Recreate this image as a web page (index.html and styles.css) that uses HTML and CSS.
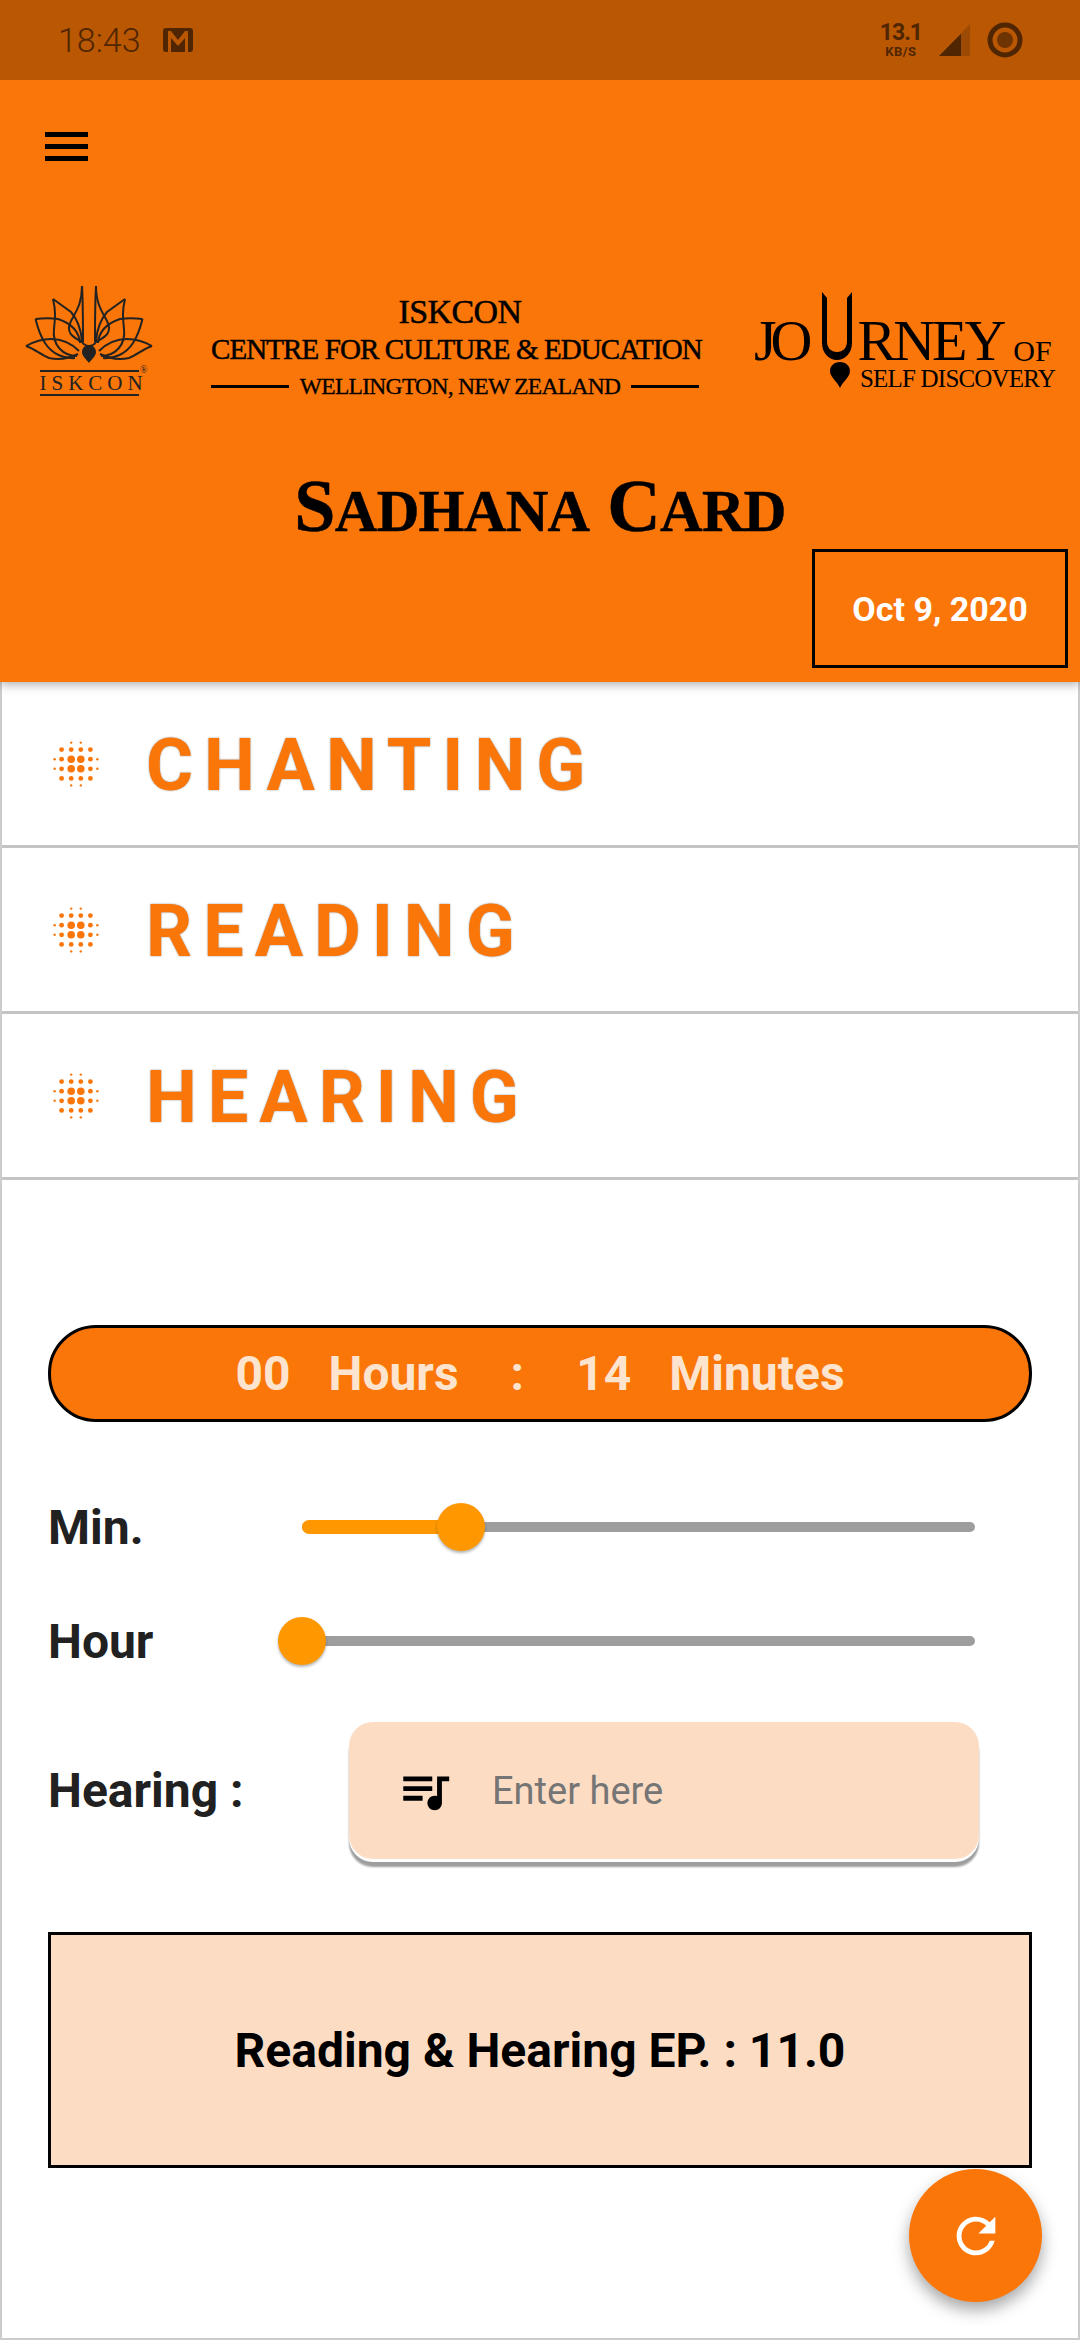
FILE: index.html
```html
<!DOCTYPE html>
<html lang="en">
<head>
<meta charset="utf-8">
<title>Sadhana Card</title>
<link rel="stylesheet" href="styles.css">
</head>
<body>
<svg class="defs" width="0" height="0">
  <symbol id="dots" viewBox="-24 -24 48 48">
    <g fill="#fb7609">
      <circle cx="-4.8" cy="-21.4" r="1.2"/><circle cx="4.8" cy="-21.4" r="1.2"/>
      <circle cx="-14.4" cy="-14.4" r="2.4"/><circle cx="-4.8" cy="-14.4" r="2.4"/><circle cx="4.8" cy="-14.4" r="2.4"/><circle cx="14.4" cy="-14.4" r="2.4"/>
      <circle cx="-21.4" cy="-4.8" r="1.2"/><circle cx="-14.4" cy="-4.8" r="2.4"/><circle cx="-4.8" cy="-4.8" r="3.8"/><circle cx="4.8" cy="-4.8" r="3.8"/><circle cx="14.4" cy="-4.8" r="2.4"/><circle cx="21.4" cy="-4.8" r="1.2"/>
      <circle cx="-21.4" cy="4.8" r="1.2"/><circle cx="-14.4" cy="4.8" r="2.4"/><circle cx="-4.8" cy="4.8" r="3.8"/><circle cx="4.8" cy="4.8" r="3.8"/><circle cx="14.4" cy="4.8" r="2.4"/><circle cx="21.4" cy="4.8" r="1.2"/>
      <circle cx="-14.4" cy="14.4" r="2.4"/><circle cx="-4.8" cy="14.4" r="2.4"/><circle cx="4.8" cy="14.4" r="2.4"/><circle cx="14.4" cy="14.4" r="2.4"/>
      <circle cx="-4.8" cy="21.4" r="1.2"/><circle cx="4.8" cy="21.4" r="1.2"/>
    </g>
  </symbol>
  <symbol id="lotus-half" viewBox="0 0 128 78">
    <g fill="none" stroke="#222" stroke-width="2" stroke-linejoin="miter">
      <path d="M57 1C57 20 50 28 46 36C40 48 48 52 57 57C59 60 61 61 64 61"/>
      <path d="M57 1C58 18 58 40 58 57"/>
      <path d="M28 14L46 27C52 34 56 44 57 56"/>
      <path d="M28 14C31 26 30 34 29 44C27 60 38 71 52 71"/>
      <path d="M10.5 34C18 33 27 33 33 34C45 38 54 46 55 58"/>
      <path d="M10.5 34C13 44 16 52 20 58C27 69 39 74 50 73"/>
      <path d="M1 61C10 56 18 54 26 54C37 54 47 59 54 66"/>
      <path d="M1 61C10 64 16 70 24 73C34 75 45 73 53 69"/>
    </g>
  </symbol>
</svg>

<div class="app">
  <header class="hero">
    <div class="status">
      <div class="status-left">
        <span class="time">18:43</span>
        <svg class="gmail" viewBox="0 0 30 24"><rect width="30" height="24" rx="3" fill="#4f2601"/><path d="M5 24V3h3l7 9 7-9h3v21h-3V10l-7 8-7-8v14z" fill="#b95703"/></svg>
      </div>
      <div class="status-right">
        <div class="speed"><span class="speed-num">13.1</span><span class="speed-unit">KB/S</span></div>
        <svg class="signal" viewBox="0 0 31 32"><path d="M31 0V32H0z" fill="#9c4a04"/><path d="M22 10V32H0z" fill="#4f2601"/></svg>
        <svg class="ring" viewBox="0 0 36 36"><circle cx="18" cy="18" r="15" fill="none" stroke="#4f2601" stroke-width="5"/><circle cx="18" cy="18" r="8" fill="#6e3402"/></svg>
      </div>
    </div>

    <div class="toolbar">
      <button class="menu" aria-label="Menu"><span></span><span></span><span></span></button>
    </div>

    <div class="banner">
      <div class="logo-iskcon">
        <svg class="lotus" viewBox="0 0 128 78">
          <use href="#lotus-half" width="128" height="78"/>
          <use href="#lotus-half" width="128" height="78" transform="matrix(-1 0 0 1 128 0)"/>
          <path d="M64 60C69 60 71 64 71 67C71 71 67 74 64 78C61 74 57 71 57 67C57 64 59 60 64 60z" fill="#222"/>
        </svg>
        <div class="iskcon-mark">ISKCON<sup class="reg">®</sup></div>
      </div>

      <div class="logo-centre">
        <div class="centre-a">ISKCON</div>
        <div class="centre-b">CENTRE FOR CULTURE &amp; EDUCATION</div>
        <div class="centre-c"><i></i><span>WELLINGTON, NEW ZEALAND</span><i></i></div>
      </div>

      <div class="logo-journey">
        <div class="journey-top">
          <span class="j-big j-jo">JO</span>
          <svg class="tilak" viewBox="0 0 36 68"><path d="M3 0L8 6V49C8 56 12 60 18 60C24 60 28 56 28 49V6L33 0V51C33 61 26 68 18 68C10 68 3 61 3 51z" fill="#000"/></svg>
          <span class="j-big j-rney">RNEY</span>
          <span class="j-of">OF</span>
        </div>
        <div class="journey-bottom">
          <svg class="drop" viewBox="0 0 22 26"><path d="M11 0C17 0 21 4 21 9C21 15 14 19 11 26C8 19 1 15 1 9C1 4 5 0 11 0z" fill="#000"/></svg>
          <span class="j-self">SELF DISCOVERY</span>
        </div>
      </div>
    </div>

    <h1 class="title"><span class="cap">S</span><span class="low">adhana</span> <span class="cap">C</span><span class="low">ard</span></h1>
    <div class="date">Oct 9, 2020</div>
  </header>

  <main class="content">
    <div class="row"><svg class="dots"><use href="#dots"/></svg><span class="row-label">CHANTING</span></div>
    <div class="row"><svg class="dots"><use href="#dots"/></svg><span class="row-label">READING</span></div>
    <div class="row"><svg class="dots"><use href="#dots"/></svg><span class="row-label">HEARING</span></div>

    <div class="panel">
      <div class="pill">
        <span>00</span><span>Hours</span><span class="colon">:</span><span>14</span><span>Minutes</span>
      </div>

      <div class="slider-row slider-min">
        <span class="label">Min.</span>
        <div class="slider"><div class="fill" style="width:159px"><span class="thumb"></span></div></div>
      </div>
      <div class="slider-row slider-hour">
        <span class="label">Hour</span>
        <div class="slider"><div class="fill" style="width:0"><span class="thumb"></span></div></div>
      </div>

      <div class="hearing">
        <span class="label">Hearing :</span>
        <div class="field">
          <svg class="queue" viewBox="0 0 24 24"><path d="M15 6H3v2h12V6zm0 4H3v2h12v-2zM3 16h8v-2H3v2zM17 6v8.18c-.31-.11-.65-.18-1-.18-1.66 0-3 1.34-3 3s1.34 3 3 3 3-1.34 3-3V8h3V6h-5z"/></svg>
          <span class="placeholder">Enter here</span>
        </div>
      </div>

      <div class="summary">Reading &amp; Hearing EP. : 11.0</div>
    </div>

    <button class="fab" aria-label="Refresh">
      <svg viewBox="0 0 24 24"><path d="M17.65 6.35C16.2 4.9 14.21 4 12 4c-4.42 0-7.99 3.58-7.99 8s3.57 8 7.99 8c3.73 0 6.84-2.55 7.73-6h-2.08c-.82 2.33-3.04 4-5.65 4-3.31 0-6-2.69-6-6s2.69-6 6-6c1.66 0 3.14.69 4.22 1.78L13 11h7V4l-2.35 2.35z"/></svg>
    </button>
  </main>
</div>
</body>
</html>
```

FILE: styles.css
```css
* { box-sizing: border-box; }
html, body { margin: 0; padding: 0; }
body { width: 1080px; height: 2340px; overflow: hidden; background: #fff; font-family: Roboto, "Liberation Sans", sans-serif; }
.defs { position: absolute; }
.app { width: 1080px; height: 2340px; display: flex; flex-direction: column; }

/* header */
.hero { height: 682px; background: #fb7609; display: flex; flex-direction: column; position: relative; z-index: 1; box-shadow: 0 2px 10px rgba(0,0,0,.35); }
.status { height: 80px; background: #b95703; display: flex; justify-content: space-between; align-items: center; padding: 0 57px 0 58px; color: #4f2601; }
.status-left { display: flex; align-items: center; gap: 22px; }
.time { font-size: 34px; font-weight: 300; }
.gmail { width: 30px; height: 24px; }
.status-right { display: flex; align-items: center; gap: 17px; }
.speed { display: flex; flex-direction: column; align-items: center; font-weight: 700; line-height: 1; }
.speed-num { font-size: 23px; letter-spacing: -1px; line-height: 22px; }
.speed-unit { font-size: 13px; line-height: 15px; letter-spacing: .5px; }
.signal { width: 31px; height: 32px; }
.ring { width: 36px; height: 36px; }

.toolbar { height: 205px; padding: 52px 0 0 45px; }
.menu { border: 0; background: none; padding: 0; width: 43px; height: 29px; display: flex; flex-direction: column; justify-content: space-between; }
.menu span { display: block; height: 5px; width: 43px; background: #000; }

.banner { height: 120px; display: flex; padding: 0 0 0 25px; font-family: "Liberation Serif", serif; color: #000; }
.logo-iskcon { width: 128px; flex: none; display: flex; flex-direction: column; align-items: center; }
.lotus { width: 128px; height: 78px; display: block; }
.iskcon-mark { position: relative; margin-top: 7px; width: 99px; border-top: 2px solid #222; border-bottom: 2px solid #222; font-size: 21px; line-height: 22px; letter-spacing: 5px; text-align: center; color: #222; white-space: nowrap; }
.reg { position: absolute; right: -9px; top: -7px; font-size: 10px; line-height: 10px; letter-spacing: 0; }

.logo-centre { width: 488px; flex: none; margin-left: 58px; padding-top: 8px; text-align: center; white-space: nowrap; }
.centre-a { padding-left: 10px; font-size: 34px; line-height: 38px; letter-spacing: -.6px; -webkit-text-stroke: .5px #000; }
.centre-b { font-size: 29px; line-height: 36px; letter-spacing: -.9px; -webkit-text-stroke: .5px #000; }
.centre-c { display: flex; align-items: center; justify-content: space-between; margin-top: 4px; font-size: 23.5px; line-height: 30px; letter-spacing: -.7px; -webkit-text-stroke: .3px #000; }
.centre-c i { display: block; width: 78px; height: 3px; background: #000; }
.centre-c i:last-child { width: 68px; }

.logo-journey { width: 302px; flex: none; margin-left: 55px; padding-top: 7px; white-space: nowrap; }
.journey-top { display: flex; align-items: flex-end; height: 68px; }
.j-big { font-size: 58px; line-height: 50px; height: 50px; margin-bottom: -6px; }
.j-jo { letter-spacing: -6px; }
.j-rney { letter-spacing: -3px; }
.j-of { font-size: 30px; line-height: 30px; margin: 0 0 -6px 10px; }
.tilak { width: 36px; height: 68px; margin: 0 2px 0 13px; flex: none; }
.journey-bottom { display: flex; align-items: flex-start; margin-top: 2px; padding-left: 75px; }
.drop { width: 22px; height: 26px; flex: none; }
.j-self { font-size: 25px; line-height: 26px; letter-spacing: -.8px; margin: 4px 0 0 9px; }

.title { margin: 59px 0 0; height: 85px; font-family: "Liberation Serif", serif; font-weight: 700; font-size: 74px; line-height: 85px; letter-spacing: -.7px; text-align: center; color: #000; white-space: nowrap; -webkit-text-stroke: .5px #000; }
.title .low { text-transform: uppercase; font-size: 59px; }
.date { align-self: flex-end; margin: 0 12px 0 0; width: 256px; height: 119px; border: 3px solid #000; color: #fff; font-size: 34px; font-weight: 700; display: flex; align-items: center; justify-content: center; }

/* content */
.content { flex: 1; position: relative; border: solid #ccc; border-width: 0 2px 2px; }
.row { height: 166px; border-bottom: 3px solid #c4c4c4; display: flex; align-items: center; padding: 0 0 0 50px; }
.dots { width: 48px; height: 48px; }
.row-label { margin-left: 46px; padding-top: 4px; font-size: 72px; font-weight: 700; letter-spacing: 11px; color: #fb7609; text-shadow: 0 0 2px rgba(0,0,0,.45); line-height: 1; }

.panel { padding: 145px 46px 0; }
.pill { height: 97px; border: 3px solid #000; border-radius: 48px; background: #fb7609; color: #fde4cf; font-size: 48px; font-weight: 700; display: flex; align-items: center; justify-content: center; gap: 0 38px; }
.colon { margin: 0 14px; }
.label { font-size: 48px; font-weight: 700; color: #212121; white-space: nowrap; }

.slider-row { display: flex; align-items: center; height: 70px; }
.slider-min { margin-top: 70px; }
.slider-hour { margin-top: 44px; }
.slider-row .label { width: 254px; flex: none; }
.slider { width: 673px; height: 10px; border-radius: 5px; background: #9e9e9e; position: relative; }
.fill { position: absolute; left: 0; top: -2px; height: 14px; background: #ff9800; border-radius: 7px; }
.thumb { position: absolute; right: -24px; top: -17px; width: 48px; height: 48px; border-radius: 50%; background: #ff9800; box-shadow: 0 2px 3px rgba(0,0,0,.3); }

.hearing { display: flex; align-items: center; margin-top: 46px; }
.hearing .label { width: 301px; flex: none; }
.field { width: 630px; height: 137px; border-radius: 24px; background: #fddcc4; display: flex; align-items: center; padding-left: 47px; box-shadow: 0 3px 0 #fff, 0 8px 2px #9e9e9e; }
.queue { width: 58px; height: 58px; fill: #000; flex: none; }
.placeholder { margin-left: 38px; font-size: 38px; color: #757575; }

.summary { height: 236px; margin-top: 73px; border: 3px solid #000; background: #fddcc4; color: #000; font-size: 48px; font-weight: 700; display: flex; align-items: center; justify-content: center; }

.fab { position: absolute; right: 36px; bottom: 36px; width: 133px; height: 133px; padding: 0; border: 0; border-radius: 50%; background: #fb7609; display: flex; align-items: center; justify-content: center; box-shadow: 0 8px 16px rgba(0,0,0,.35); }
.fab svg { width: 58px; height: 58px; fill: #fff; }
```
